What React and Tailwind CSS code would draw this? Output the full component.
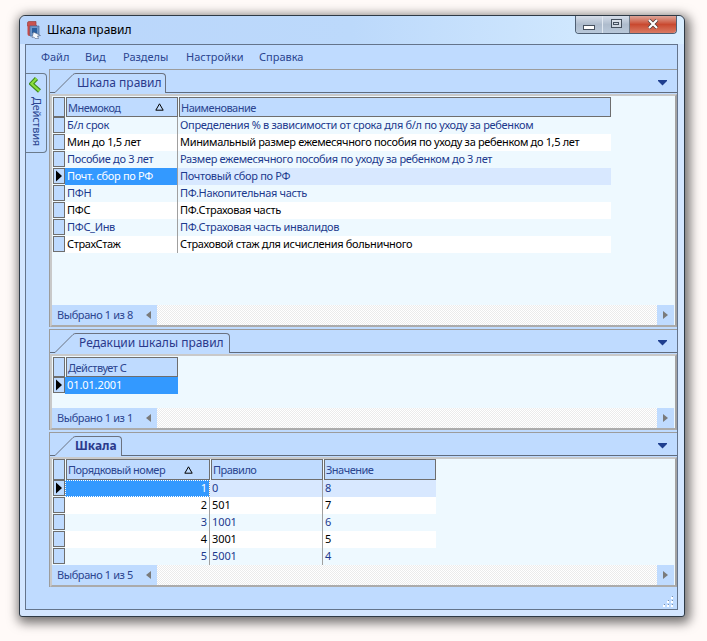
import React from 'react';

const rows1 = [
  ['Б/л срок', 'Определения % в зависимости от срока для б/л по уходу за ребенком'],
  ['Мин до 1,5 лет', 'Минимальный размер ежемесячного пособия по уходу за ребенком до 1,5 лет'],
  ['Пособие до 3 лет', 'Размер ежемесячного пособия по уходу за ребенком до 3 лет'],
  ['Почт. сбор по РФ', 'Почтовый сбор по РФ'],
  ['ПФН', 'ПФ.Накопительная часть'],
  ['ПФС', 'ПФ.Страховая часть'],
  ['ПФС_Инв', 'ПФ.Страховая часть инвалидов'],
  ['СтрахСтаж', 'Страховой стаж для исчисления больничного'],
];

const rows3 = [
  ['1', '0', '8'],
  ['2', '501', '7'],
  ['3', '1001', '6'],
  ['4', '3001', '5'],
  ['5', '5001', '4'],
];

const Pointer = () => (
  <svg width="10" height="12" viewBox="0 0 10 12">
    <path d="M2 0.5 L8 6 L2 11.5 Z" fill="#000" />
  </svg>
);

const Selector = ({ active, className = 'h-[16px] mb-[1px]' }) => (
  <div className={`w-[12px] shrink-0 border border-[#6e6e6e] bg-[#bfdbff] flex items-center justify-center ${className}`}>
    {active && <Pointer />}
  </div>
);

const SortMark = () => (
  <svg width="9" height="8" viewBox="0 0 9 8" className="shrink-0">
    <path d="M4.5 0.8 L8.2 7.2 L0.8 7.2 Z" fill="none" stroke="#000" strokeWidth="1" />
  </svg>
);

const HeaderCell = ({ width, sorted, markClass, children, height }) => (
  <div className={`ml-[1px] border border-[#6e6e6e] bg-[#bfdbff] text-[#2b4590] flex items-center justify-between pl-[1px] tracking-[-0.5px] ${width} ${height}`}>
    <span>{children}</span>
    {sorted && <span className={markClass}><SortMark /></span>}
  </div>
);

const TabShape = () => (
  <div className="absolute inset-0 flex">
    <svg width="21" height="20" viewBox="0 0 21 20" className="shrink-0">
      <path d="M0 20 L0 19.5 L18 1.5 Q19 0.5 21 0.5 L21 20 Z" fill="#bfdbff" />
      <path d="M0 19.5 L18 1.5 Q19 0.5 21 0.5" fill="none" stroke="#6b7280" />
    </svg>
    <div className="flex-1 bg-[#bfdbff] border-t border-r border-[#6b7280] rounded-tr-[4px]" />
  </div>
);

const Tab = ({ width, left, bold, children }) => (
  <div className={`relative h-[20px] mt-[3px] ml-[5px] ${width}`}>
    <TabShape />
    <span className={`relative block text-[12px] leading-[20px] text-[#2b3a8c] whitespace-nowrap ${left} ${bold ? 'font-bold' : ''}`}>
      {children}
    </span>
  </div>
);

const DropArrow = () => (
  <svg width="9" height="6" viewBox="0 0 9 6" className="mr-[10px] mt-[10px] shrink-0">
    <path d="M0 0 H9 V1 L4.5 5.5 L0 1 Z" fill="#1f3f8f" />
  </svg>
);

const StatusBar = ({ text }) => (
  <div className="h-[20px] shrink-0 mr-[1px] flex">
    <div className="w-[105px] bg-[#bfdbff] flex items-center pl-[5px] pb-[1px] text-[#2b4590] tracking-[-0.4px]">
      <span className="whitespace-nowrap">{text}</span>
      <svg width="5" height="8" viewBox="0 0 5 8" className="ml-auto mr-[6px]">
        <path d="M5 0 V8 L0 4 Z" fill="#7a7a7a" />
      </svg>
    </div>
    <div className="flex-1 bg-[image:repeating-conic-gradient(#ffffff_0_25%,#ebebeb_0_50%)] bg-[length:2px_2px]" />
    <div className="w-[17px] bg-[#bfdbff] flex items-center justify-center">
      <svg width="5" height="8" viewBox="0 0 5 8">
        <path d="M0 0 V8 L5 4 Z" fill="#7a7a7a" />
      </svg>
    </div>
  </div>
);

const Panel = ({ height, margin, tabWidth, tabLeft, bold, title, status, gridPad, children }) => (
  <div className={`border-t border-l border-[#9c9c9c] flex flex-col ${height} ${margin}`}>
    <div className="h-[23px] shrink-0 border-b border-[#5f6b7d] flex justify-between">
      <Tab width={tabWidth} left={tabLeft} bold={bold}>{title}</Tab>
      <DropArrow />
    </div>
    <div className="flex-1 min-h-0 mt-[1px] border-2 border-[#c9c9c9] border-r-[#a3a3a3] border-b-[#ababab] bg-[#eef9ff] flex flex-col">
      <div className={`flex-1 min-h-0 pl-[1px] ${gridPad}`}>{children}</div>
      <StatusBar text={status} />
    </div>
  </div>
);

const cellText = (even) => (even ? 'bg-[#eef9ff] text-[#1c3a8e]' : 'bg-white text-black');

const Grip = () => (
  <svg width="12" height="12" viewBox="0 0 12 12" className="absolute right-[2px] bottom-[1px]">
    <g fill="#ffffff">
      <rect x="0" y="9" width="2" height="2" />
      <rect x="4" y="9" width="2" height="2" />
      <rect x="8" y="9" width="2" height="2" />
      <rect x="4" y="5" width="2" height="2" />
      <rect x="8" y="5" width="2" height="2" />
      <rect x="8" y="1" width="2" height="2" />
    </g>
    <g fill="#7d8fa8">
      <rect x="1" y="8" width="1" height="1" />
      <rect x="5" y="8" width="1" height="1" />
      <rect x="9" y="8" width="1" height="1" />
      <rect x="5" y="4" width="1" height="1" />
      <rect x="9" y="4" width="1" height="1" />
      <rect x="9" y="0" width="1" height="1" />
    </g>
  </svg>
);

const AppIcon = () => (
  <svg width="14" height="18" viewBox="0 0 14 18" className="shrink-0">
    <path d="M0.5 2 Q0.5 0.5 2 0.5 H9 V5 H0.5 Z" fill="#c9524f" stroke="#96403f" strokeWidth="0.7" />
    <path d="M0.5 4 L10 4 V15 H2.5 Q0.5 15 0.5 13 Z" fill="#c44a48" />
    <path d="M3 5 H12 V15 H3 Z" fill="#6f97c9" stroke="#4c6f9f" strokeWidth="0.7" />
    <path d="M5 7 H10 V12 H5 Z" fill="#2a5f9f" />
    <path d="M6.5 11 L13.5 14.5 L10.5 15 L11.5 17.5 L8 17.5 L7 16 L5 16.5 Z" fill="#f4f8fc" stroke="#3c4f70" strokeWidth="0.5" />
  </svg>
);

const Chevron = () => (
  <svg width="14" height="17" viewBox="0 0 14 17">
    <path d="M7.5 1.5 L2.5 6.8 L10.5 14" fill="none" stroke="#3f8a1d" strokeWidth="4.4" />
    <path d="M7.5 1.5 L2.5 6.8 L10.5 14" fill="none" stroke="#8ade3e" strokeWidth="2.2" />
  </svg>
);

const WindowButtons = () => (
  <div className="flex h-[18px] w-[102px] mr-[7px] border border-t-0 border-[#4f5f73] rounded-b-[4px] overflow-hidden">
    <div className="w-[27px] border-r border-[#dfe7f0] bg-gradient-to-b from-[#d6deea] via-[#aebccd] to-[#b9c8d9] flex items-end justify-center pb-[3px]">
      <div className="w-[12px] h-[5px] border border-[#45505e] bg-white" />
    </div>
    <div className="w-[27px] border-r border-[#6e7a88] bg-gradient-to-b from-[#d6deea] via-[#aebccd] to-[#b9c8d9] flex items-center justify-center pb-[3px]">
      <div className="w-[11px] h-[9px] border border-[#45505e] bg-white/40 flex items-center justify-center">
        <div className="w-[6px] h-[3px] border border-[#45505e]" />
      </div>
    </div>
    <div className="flex-1 bg-gradient-to-b from-[#dca498] via-[#c9492f] to-[#d97a63] flex items-center justify-center pb-[2px]">
      <svg width="12" height="10" viewBox="0 0 12 10">
        <path d="M2 1 L10 9 M10 1 L2 9" stroke="#4b3a3a" strokeWidth="3.6" />
        <path d="M2 1 L10 9 M10 1 L2 9" stroke="#ffffff" strokeWidth="2.2" />
      </svg>
    </div>
  </div>
);

export default function App() {
  return (
    <div className="w-[707px] h-[641px] bg-[#fffaf8] pt-[15px] pl-[19px] overflow-hidden font-['Noto_Sans',sans-serif] text-[11px] leading-none">
      <div className="w-[666px] h-[602px] border border-[#2e3a46] rounded-t-[6px] rounded-b-[3px] bg-[#d3e6ff] shadow-[2px_3px_11px_3px_rgba(0,0,0,0.55)] flex flex-col">
        {/* title bar */}
        <div className="h-[28px] shrink-0 flex justify-between rounded-t-[6px] bg-gradient-to-r from-[#bad6fb] via-[#bcd9fb] to-[#d9eeff]">
          <div className="flex items-center pl-[7px]">
            <AppIcon />
            <span className="ml-[6px] text-[12px] text-black">Шкала правил</span>
          </div>
          <WindowButtons />
        </div>

        {/* client area */}
        <div className="relative ml-[5px] w-[653px] h-[566px] border border-[#64748b] bg-[#bfdbff] flex flex-col">
          <div className="h-[24px] shrink-0 flex items-center pl-[15px] pb-[1px] text-[#2b4590]">
            <span className="w-[44px]">Файл</span>
            <span className="w-[38px]">Вид</span>
            <span className="w-[63px]">Разделы</span>
            <span className="w-[73px]">Настройки</span>
            <span>Справка</span>
          </div>
          <div className="flex-1 min-h-0 flex">
            <div className="w-[23px] shrink-0 pt-[4px]">
              <div className="w-[21px] h-[80px] border border-l-0 border-[#6b7b8c] rounded-r-[4px] flex flex-col items-center pt-[3px]">
                <Chevron />
                <span className="ml-[2px] mt-[3px] text-[#2b4590] whitespace-nowrap tracking-[-0.25px] [writing-mode:vertical-rl]">Действия</span>
              </div>
            </div>
            <div className="w-[628px] flex flex-col">
              <Panel height="h-[258px]" margin="" tabWidth="w-[111px]" tabLeft="pl-[22px]" title="Шкала правил" status="Выбрано 1 из 8" gridPad="pt-[1px]">
                <div className="flex">
                  <Selector className="h-[20px]" />
                  <HeaderCell width="w-[112px]" height="h-[20px]" sorted markClass="mr-[13px]">Мнемокод</HeaderCell>
                  <HeaderCell width="w-[432px]" height="h-[20px]">Наименование</HeaderCell>
                </div>
                {rows1.map((row, i) => {
                  const selected = i === 3;
                  const even = i % 2 === 0 || i === 3;
                  return (
                    <div key={row[0]} className="flex h-[17px] tracking-[-0.33px]">
                      <Selector active={selected} />
                      <div className={`w-[113px] border-r border-[#a0a0a0] pl-[2px] pb-[3px] flex items-center whitespace-nowrap ${selected ? 'bg-[#3399ff] text-white' : cellText(even)}`}>{row[0]}</div>
                      <div className={`w-[433px] pl-[2px] pb-[3px] flex items-center whitespace-nowrap ${selected ? 'bg-[#d8e8ff] text-[#1c3a8e]' : cellText(even)}`}>{row[1]}</div>
                    </div>
                  );
                })}
              </Panel>

              <Panel height="h-[101px]" margin="mt-[2px]" tabWidth="w-[175px]" tabLeft="pl-[24px]" title="Редакции шкалы правил" status="Выбрано 1 из 1" gridPad="pt-[1px]">
                <div className="flex">
                  <Selector className="h-[20px]" />
                  <HeaderCell width="w-[112px]" height="h-[20px]">Действует С</HeaderCell>
                </div>
                <div className="flex h-[17px] tracking-[-0.1px]">
                  <Selector active />
                  <div className="w-[113px] bg-[#3399ff] text-white pl-[2px] pb-[3px] flex items-center">01.01.2001</div>
                </div>
              </Panel>

              <Panel height="h-[155px]" margin="mt-[2px]" tabWidth="w-[67px]" tabLeft="pl-[20px]" bold title="Шкала" status="Выбрано 1 из 5" gridPad="">
                <div className="flex">
                  <Selector className="h-[21px]" />
                  <HeaderCell width="w-[144px]" height="h-[21px]" sorted markClass="mr-[16px]">Порядковый номер</HeaderCell>
                  <HeaderCell width="w-[112px]" height="h-[21px]">Правило</HeaderCell>
                  <HeaderCell width="w-[112px]" height="h-[21px]">Значение</HeaderCell>
                </div>
                {rows3.map((row, i) => {
                  const selected = i === 0;
                  const even = i % 2 === 0;
                  return (
                    <div key={row[0]} className="flex h-[17px] tracking-[-0.1px]">
                      <Selector active={selected} />
                      <div className={`w-[145px] border-r border-[#a0a0a0] pr-[2px] pb-[3px] flex items-center justify-end ${selected ? 'bg-[#3399ff] text-white outline-1 -outline-offset-1 outline-dotted outline-white' : cellText(even)}`}>{row[0]}</div>
                      <div className={`w-[113px] border-r border-[#a0a0a0] pl-[2px] pb-[3px] flex items-center ${selected ? 'bg-[#d8e8ff] text-[#1c3a8e]' : cellText(even)}`}>{row[1]}</div>
                      <div className={`w-[113px] pl-[2px] pb-[3px] flex items-center ${selected ? 'bg-[#d8e8ff] text-[#1c3a8e]' : cellText(even)}`}>{row[2]}</div>
                    </div>
                  );
                })}
              </Panel>
            </div>
          </div>
          <Grip />
        </div>
      </div>
    </div>
  );
}
